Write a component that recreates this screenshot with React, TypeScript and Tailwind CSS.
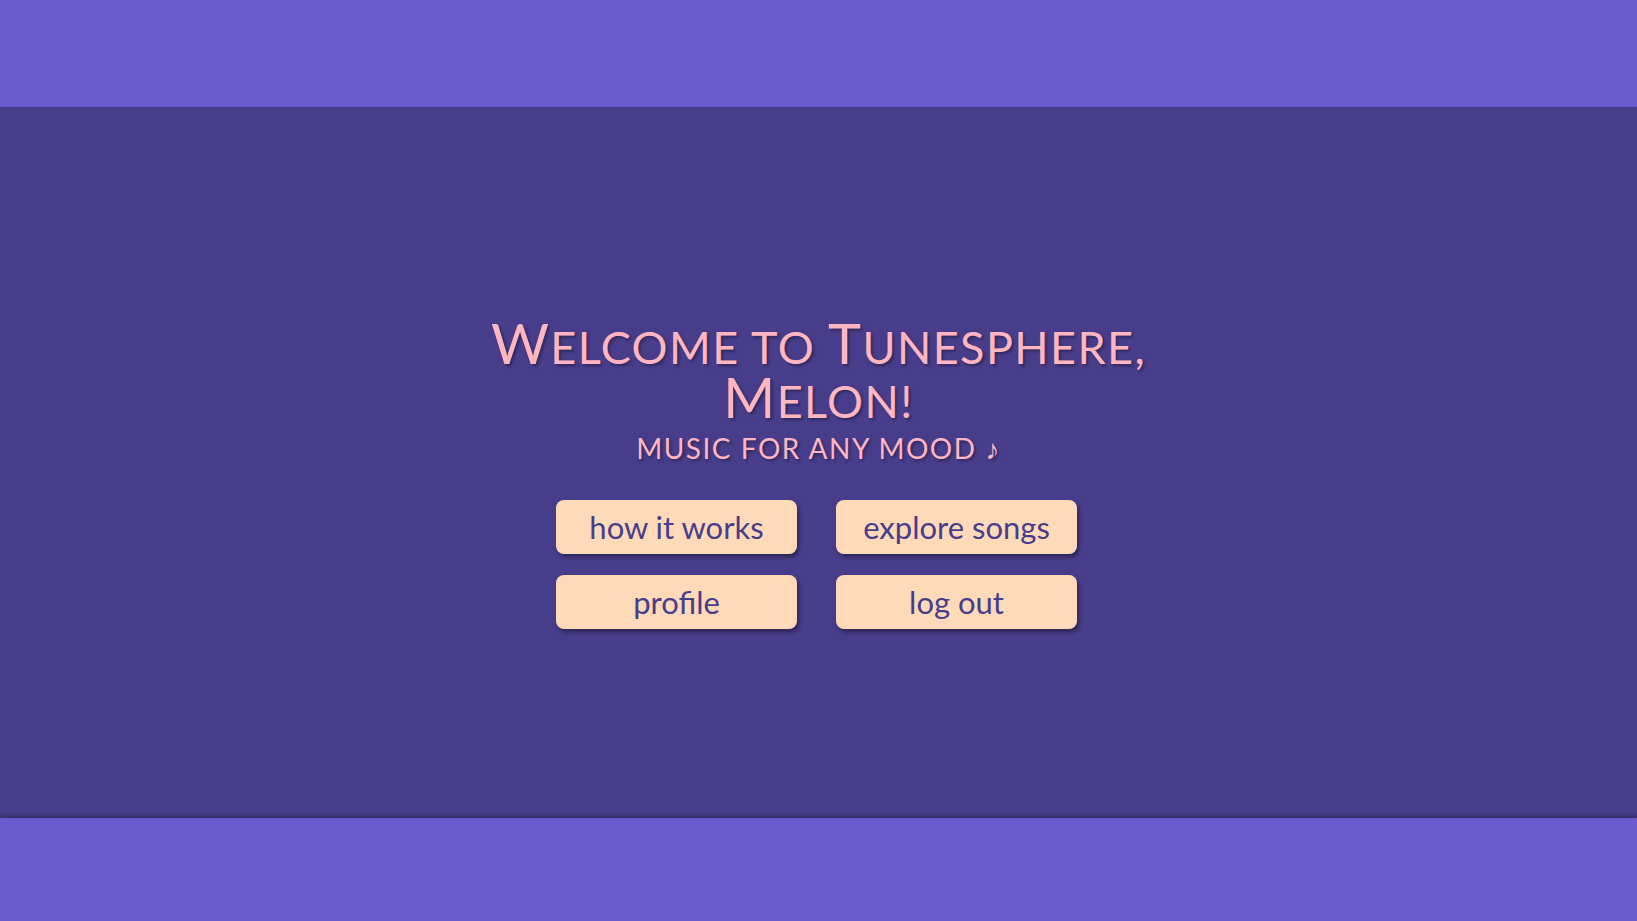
const Cap = ({ children }: { children: string }) => (
  <span className="text-[56px]">{children}</span>
)

export default function App() {
  const buttons = ['how it works', 'explore songs', 'profile', 'log out']

  return (
    <div
      className="flex flex-col h-[921px] w-full bg-[#483d8b] overflow-hidden"
      style={{ fontFamily: 'Lato, "Open Sans", sans-serif' }}
    >
      <header className="h-[107px] shrink-0 bg-[#6a5acd]" />

      <main className="flex-1 flex flex-col items-center justify-center pt-[22px]">
        <h1 className="text-center text-[#ffb6c1] text-[45px] leading-[50px] tracking-[1.4px] font-normal uppercase [text-shadow:2px_2px_3px_rgba(0,0,0,0.35)]">
          <Cap>W</Cap>elcome to <Cap>T</Cap>unesphere,
          <br />
          <Cap>M</Cap>elon!
        </h1>
        <p className="mt-[5px] text-center text-[#ffb6c1] text-[28px] leading-[34px] tracking-[1.5px] uppercase [text-shadow:2px_2px_3px_rgba(0,0,0,0.35)]">
          music for any mood ♪
        </p>

        <div className="mt-[35px] -ml-[4px] grid grid-cols-[241px_241px] gap-x-[39px] gap-y-[21px]">
          {buttons.map((label) => (
            <button
              key={label}
              className="h-[54px] rounded-[8px] bg-[#ffdab9] text-[#483d8b] text-[31px] shadow-[2px_3px_4px_rgba(0,0,0,0.4)]"
            >
              {label}
            </button>
          ))}
        </div>
      </main>

      <footer className="h-[103px] shrink-0 bg-[#6a5acd] shadow-[0_-2px_4px_rgba(0,0,0,0.3)]" />
    </div>
  )
}
